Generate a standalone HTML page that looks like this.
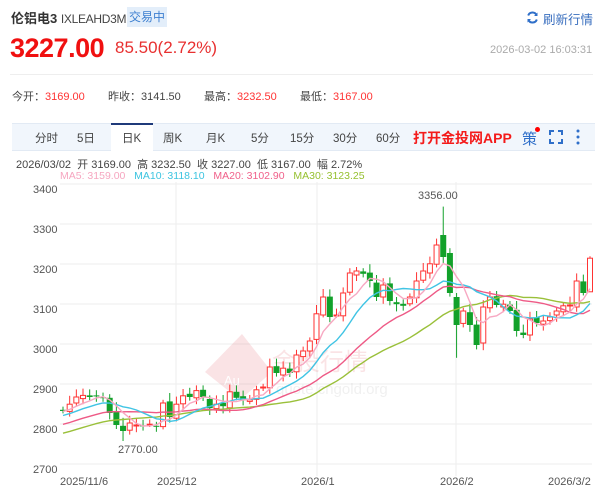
<!DOCTYPE html>
<html><head><meta charset="utf-8">
<style>
*{margin:0;padding:0;box-sizing:border-box}
body{width:600px;height:487px;background:#fff;font-family:"Liberation Sans","Noto Sans CJK SC",sans-serif;position:relative;overflow:hidden;color:#333}
.a{position:absolute;white-space:nowrap}
</style></head><body>
<div class="a" style="left:11px;top:8px;font-size:13px;color:#333"><b style="font-weight:bold">伦铝电3</b> <span style="font-size:12px;color:#444;letter-spacing:-0.3px">IXLEAHD3M</span></div>
<div class="a" style="left:127px;top:7px;width:40px;height:20px;background:#e3eefa;color:#3d7fd0;font-size:12px;line-height:20px;text-align:center">交易中</div>
<svg class="a" style="left:526px;top:11px" width="13" height="13" viewBox="0 0 13 13"><path d="M10.5 4A4.5 4.5 0 0 0 2.2 4.5M2.5 9A4.5 4.5 0 0 0 10.8 8.5" stroke="#2f6fc9" stroke-width="2" fill="none"/><path d="M11.5 1.5v3.5H8z M1.5 11.5V8H5z" fill="#2f6fc9"/></svg>
<div class="a" style="left:543px;top:9px;font-size:12.5px;color:#3a6fbf">刷新行情</div>
<div class="a" style="left:10px;top:33px;font-size:27px;font-weight:bold;color:#f01010;letter-spacing:-0.5px">3227.00</div>
<div class="a" style="left:115px;top:38px;font-size:17px;color:#e83030">85.50(2.72%)</div>
<div class="a" style="left:490px;top:44px;font-size:11px;color:#aaa">2026-03-02 16:03:31</div>
<div class="a" style="left:10px;top:74px;width:583px;height:1px;background:#eee"></div>
<div class="a" style="left:12px;top:88px;font-size:11px;color:#444">今开：<span style="color:#f33">3169.00</span></div>
<div class="a" style="left:108px;top:88px;font-size:11px;color:#444">昨收：3141.50</div>
<div class="a" style="left:204px;top:88px;font-size:11px;color:#444">最高：<span style="color:#f33">3232.50</span></div>
<div class="a" style="left:300px;top:88px;font-size:11px;color:#444">最低：<span style="color:#f33">3167.00</span></div>
<div class="a" style="left:12px;top:123px;width:583px;height:28px;background:#f1f6fc;border-top:1px solid #e2eaf4;border-bottom:1px solid #e2eaf4"></div>
<div class="a" style="left:111px;top:123px;width:42px;height:28px;background:#fff;border-top:2px solid #1f3a7a"></div>
<div class="a" style="top:130px;left:0;width:600px;font-size:11.5px;color:#444">
<span class="a" style="left:35px">分时</span><span class="a" style="left:77px">5日</span><span class="a" style="left:122px">日K</span><span class="a" style="left:163px">周K</span><span class="a" style="left:206px">月K</span><span class="a" style="left:251px">5分</span><span class="a" style="left:290px">15分</span><span class="a" style="left:333px">30分</span><span class="a" style="left:376px">60分</span></div>
<div class="a" style="left:413px;top:128px;font-size:14px;font-weight:bold;color:#f41a1a">打开金投网APP</div>
<div class="a" style="left:522px;top:128px;font-size:15px;color:#2f6fc9">策</div>
<div class="a" style="left:535px;top:127px;width:5px;height:5px;border-radius:50%;background:#f00"></div>
<svg class="a" style="left:549px;top:130px" width="14" height="14"><path d="M1 5V1H5M9 1H13V5M13 9V13H9M5 13H1V9" stroke="#2f6fc9" stroke-width="2" fill="none"/></svg>
<svg class="a" style="left:576px;top:129px" width="4" height="16"><circle cx="2" cy="2" r="1.5" fill="#2f6fc9"/><circle cx="2" cy="8" r="1.5" fill="#2f6fc9"/><circle cx="2" cy="14" r="1.5" fill="#2f6fc9"/></svg>
<div class="a" style="left:16px;top:156px;font-size:11px;color:#444">2026/03/02 &nbsp;开 3169.00 &nbsp;高 3232.50 &nbsp;收 3227.00 &nbsp;低 3167.00 &nbsp;幅 2.72%</div>
<div class="a" style="left:60px;top:170px;font-size:10.5px"><span style="color:#f6a6c0">MA5: 3159.00</span> &nbsp;&nbsp;<span style="color:#3cc4e0">MA10: 3118.10</span> &nbsp;&nbsp;<span style="color:#f0608a">MA20: 3102.90</span> &nbsp;&nbsp;<span style="color:#96c030">MA30: 3123.25</span></div>
<svg id="ch" class="a" style="left:0;top:0" width="600" height="487"></svg>
<script>
var s=document.getElementById('ch'),h='';
function Y(p){return 189+(3400-p)*0.4;}
h+='<g font-family="Liberation Sans" font-size="11" fill="#555">';
[3400,3300,3200,3100,3000,2900,2800,2700].forEach(function(p){var y=Y(p);h+='<line x1="60" x2="592" y1="'+(y-5)+'" y2="'+(y-5)+'" stroke="#eee"/><text x="33" y="'+(y+4)+'">'+p+'</text>';});
[176,317,456].forEach(function(x){h+='<line x1="'+x+'" x2="'+x+'" y1="182" y2="476" stroke="#eee"/>';});
h+='<text x="60" y="485">2025/11/6</text><text x="157" y="485">2025/12</text><text x="301" y="485">2026/1</text><text x="440" y="485">2026/2</text><text x="548" y="485">2026/3/2</text>';
h+='<text x="418" y="199">3356.00</text><text x="118" y="453">2770.00</text></g>';
h+='<g opacity="0.12"><path d="M205 372l37-38 30 38-32 28z" fill="#d23"/><text x="272" y="370" font-size="24" fill="#d23" font-family="Noto Sans CJK SC">金投行情</text><text x="276" y="394" font-size="15" fill="#888" font-family="Liberation Sans">quote.cngold.org</text><text x="224" y="385" font-size="13" fill="#fff" font-family="Liberation Sans">Au</text></g>';
var C=[2845,2862,2880,2884,2880,2883,2877,2840,2810,2795,2815,2810,2808,2812,2806,2865,2830,2862,2883,2880,2896,2880,2852,2862,2857,2893,2878,2872,2873,2898,2905,2955,2940,2952,2940,2985,2995,3020,3088,3130,3080,3085,3140,3190,3195,3188,3170,3130,3160,3120,3112,3108,3130,3170,3195,3213,3260,3230,3140,3060,3095,3060,3010,3105,3130,3110,3112,3095,3045,3035,3075,3065,3070,3080,3095,3108,3110,3170,3140,3227];
var O=C.map(function(c,i){return i?C[i-1]+((i*37)%11-5):2850;});
O[57]=3285;O[58]=3240;O[59]=3130;O[0]=2848;
var H=[];for(var i=0;i<30;i++)H.push(2720+i*4.5);
var all=H.concat(C),N=C.length,x0=63,dx=(590-63)/(N-1);
function ma(n,col){var d='';for(var i=0;i<N;i++){var j=i+30,sum=0;for(var k=0;k<n;k++)sum+=all[j-k];d+=(i?'L':'M')+(x0+i*dx).toFixed(1)+' '+Y(sum/n).toFixed(1);}h+='<path d="'+d+'" stroke="'+col+'" stroke-width="1.4" fill="none"/>';}
for(var i=0;i<N;i++){var o=O[i],c=C[i],x=x0+i*dx,hi=Math.max(o,c)+8+(i*13)%15,lo=Math.min(o,c)-6-(i*7)%13;
if(i==57)hi=3356;if(i==9)lo=2770;if(i==59)lo=2978;if(i==N-1){hi=3232;lo=3167;}
var up=c>=o,col=up?'#f33':'#12a12a',t=Y(Math.max(o,c)),b=Y(Math.min(o,c));if(b-t<1)b=t+1;
h+='<line x1="'+x+'" x2="'+x+'" y1="'+Y(hi)+'" y2="'+Y(lo)+'" stroke="'+col+'"/>';
h+=up?'<rect x="'+(x-2.5)+'" y="'+t+'" width="5" height="'+(b-t)+'" fill="#fff" stroke="'+col+'"/>':'<rect x="'+(x-3)+'" y="'+t+'" width="6" height="'+(b-t)+'" fill="'+col+'"/>';}
ma(30,'#9ac03a');ma(20,'#ee5a86');ma(10,'#40c4e4');ma(5,'#f7a8c2');
s.innerHTML=h;
</script>
</body></html>
